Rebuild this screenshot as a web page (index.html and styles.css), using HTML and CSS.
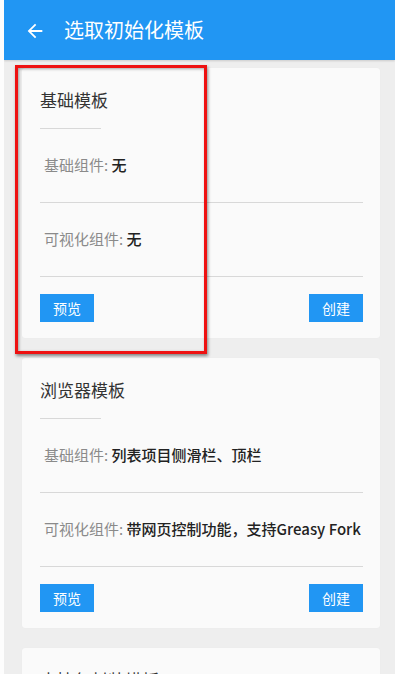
FILE: index.html
```html
<!DOCTYPE html>
<html lang="zh-CN">
<head>
<meta charset="utf-8">
<title>选取初始化模板</title>
<link rel="stylesheet" href="styles.css">
</head>
<body>
<div class="app">
  <header class="topbar">
    <svg class="back" viewBox="0 0 24 24" width="22" height="22"><path d="M20 11H7.83l5.59-5.59L12 4l-8 8 8 8 1.41-1.41L7.83 13H20v-2z" fill="#fff"/></svg>
    <h1 class="title">选取初始化模板</h1>
  </header>
  <main class="list">
    <section class="card">
      <h2 class="card-title">基础模板</h2>
      <div class="short-rule"></div>
      <div class="row"><span class="label">基础组件: </span><span class="value">无</span></div>
      <div class="row"><span class="label">可视化组件: </span><span class="value">无</span></div>
      <div class="actions"><button class="btn">预览</button><button class="btn">创建</button></div>
    </section>
    <section class="card">
      <h2 class="card-title">浏览器模板</h2>
      <div class="short-rule"></div>
      <div class="row"><span class="label">基础组件: </span><span class="value">列表项目侧滑栏、顶栏</span></div>
      <div class="row"><span class="label">可视化组件: </span><span class="value">带网页控制功能，支持Greasy Fork</span></div>
      <div class="actions"><button class="btn">预览</button><button class="btn">创建</button></div>
    </section>
    <section class="card">
      <h2 class="card-title">表情包封装模板</h2>
      <div class="short-rule"></div>
    </section>
  </main>
  <div class="highlight"></div>
</div>
</body>
</html>
```
FILE: styles.css
```css
html, body {
  margin: 0;
  padding: 0;
  background: #fdfdfd;
  height: 100%;
  overflow: hidden;
}
body {
  font-family: "Noto Sans CJK SC", "Noto Sans", Roboto, sans-serif;
}
.app {
  position: relative;
  margin-left: 4px;
  background: #eeeeee;
  height: 674px;
  overflow: hidden;
}
.topbar {
  height: 60px;
  background: #2196f3;
  display: flex;
  align-items: center;
  padding-left: 20px;
  box-shadow: 0 1px 2px rgba(0,0,0,0.15);
}
.back {
  margin-top: 2px;
}
.title {
  margin: 0 0 0 18px;
  font-size: 20px;
  font-weight: 400;
  color: #fff;
  line-height: 28px;
}
.list {
  padding: 8px 15px 0 18px;
  display: flex;
  flex-direction: column;
  gap: 20px;
}
.card {
  background: #fafafa;
  border-radius: 3px;
  padding: 20px 17px 16px 18px;
  box-shadow: 0 0 1px rgba(0,0,0,0.06);
}
.card-title {
  margin: 0;
  font-size: 17px;
  font-weight: 400;
  line-height: 24px;
  color: #333;
}
.short-rule {
  width: 61px;
  height: 1px;
  background: #d8d8d8;
  margin-top: 16px;
}
.row {
  padding: 26px 0 27px 4px;
  border-bottom: 1px solid #d8d8d8;
  font-size: 15px;
  line-height: 20px;
  white-space: nowrap;
}
.label {
  color: #8a8a8a;
}
.value {
  color: #222;
  font-weight: 500;
}
.actions {
  display: flex;
  justify-content: space-between;
  margin-top: 17px;
}
.btn {
  width: 54px;
  height: 28px;
  border: none;
  border-radius: 0;
  background: #2196f3;
  color: #fff;
  font-family: inherit;
  font-size: 14px;
  padding: 0;
}
.highlight {
  position: absolute;
  left: 11px;
  top: 65px;
  width: 186px;
  height: 283px;
  border: 3px solid #ee1111;
  box-shadow: 1px 2px 3px rgba(0,0,0,0.45), inset 1px 1px 3px rgba(0,0,0,0.35);
}
```
